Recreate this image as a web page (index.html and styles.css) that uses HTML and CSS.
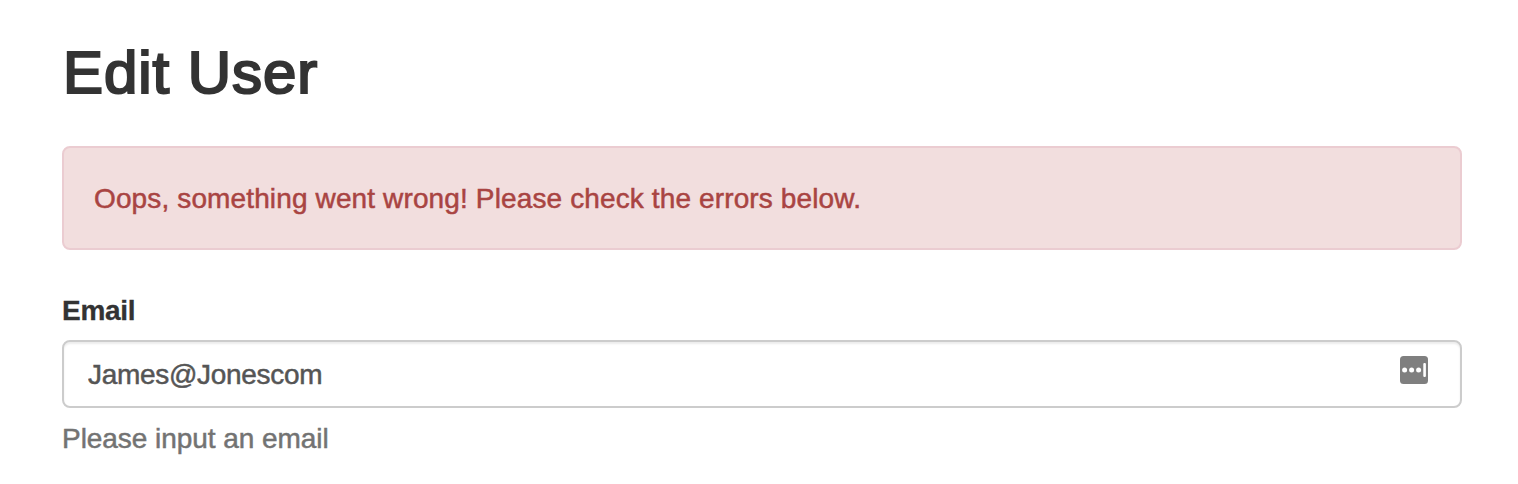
FILE: index.html
```html
<!DOCTYPE html>
<html lang="en">
<head>
<meta charset="utf-8">
<title>Edit User</title>
<link rel="stylesheet" href="styles.css">
</head>
<body>
<main class="page">
  <h1 class="title"><span>Edit User</span></h1>
  <div class="alert" role="alert"><span>Oops, something went wrong! Please check the errors below.</span></div>
  <form class="form-group">
    <label class="label" for="email">Email</label>
    <div class="control">
      <input class="input" id="email" type="text" value="James@Jonescom">
      <svg class="manager" width="28" height="28" viewBox="0 0 28 28" aria-hidden="true">
        <rect width="28" height="28" rx="3.5" fill="#7f7f7f"/>
        <circle cx="4.6" cy="14" r="2.5" fill="#fff"/>
        <circle cx="11.6" cy="14" r="2.5" fill="#fff"/>
        <circle cx="18.6" cy="14" r="2.5" fill="#fff"/>
        <rect x="23.3" y="7" width="2.6" height="14" rx="1" fill="#fff"/>
      </svg>
    </div>
    <p class="help"><span>Please input an email</span></p>
  </form>
</main>
</body>
</html>
```
FILE: styles.css
```css
* { box-sizing: border-box; }
body {
  margin: 0;
  background: #fff;
  color: #333;
  font: 28px/40px "Liberation Sans", Arial, sans-serif;
}
.page { padding: 40px 56px 0 62px; }
.title {
  margin: 0 0 40px;
  padding-left: 1px;
  font-size: 60px;
  line-height: 66px;
  font-weight: 500;
  letter-spacing: .95px;
  -webkit-text-stroke: 2.2px #333;
}
.alert {
  height: 104px;
  padding: 31px 30px 29px;
  border: 2px solid #ebccd1;
  border-radius: 8px;
  background: #f2dede;
  color: #a94442;
  letter-spacing: .13px;
  -webkit-text-stroke: .5px #a94442;
}
.form-group { margin: 40px 0 0; }
.label {
  display: block;
  height: 50px;
  padding-top: 1px;
  font-weight: 700;
  letter-spacing: -.3px;
  -webkit-text-stroke: .3px #333;
}
.control {
  display: flex;
  align-items: flex-start;
  height: 68px;
  padding: 14px 32px 0 24px;
  border: 2px solid #ccc;
  border-radius: 8px;
  box-shadow: inset 0 2px 2px rgba(0, 0, 0, .075);
}
.input {
  flex: 1;
  height: 36px;
  padding: 1px 0 0;
  border: 0;
  outline: 0;
  background: transparent;
  color: #555;
  font: inherit;
  letter-spacing: -.3px;
  -webkit-text-stroke: .5px #555;
}
.help {
  margin: 11px 0 0;
  color: #737373;
  letter-spacing: -.05px;
  -webkit-text-stroke: .5px #737373;
}
```
